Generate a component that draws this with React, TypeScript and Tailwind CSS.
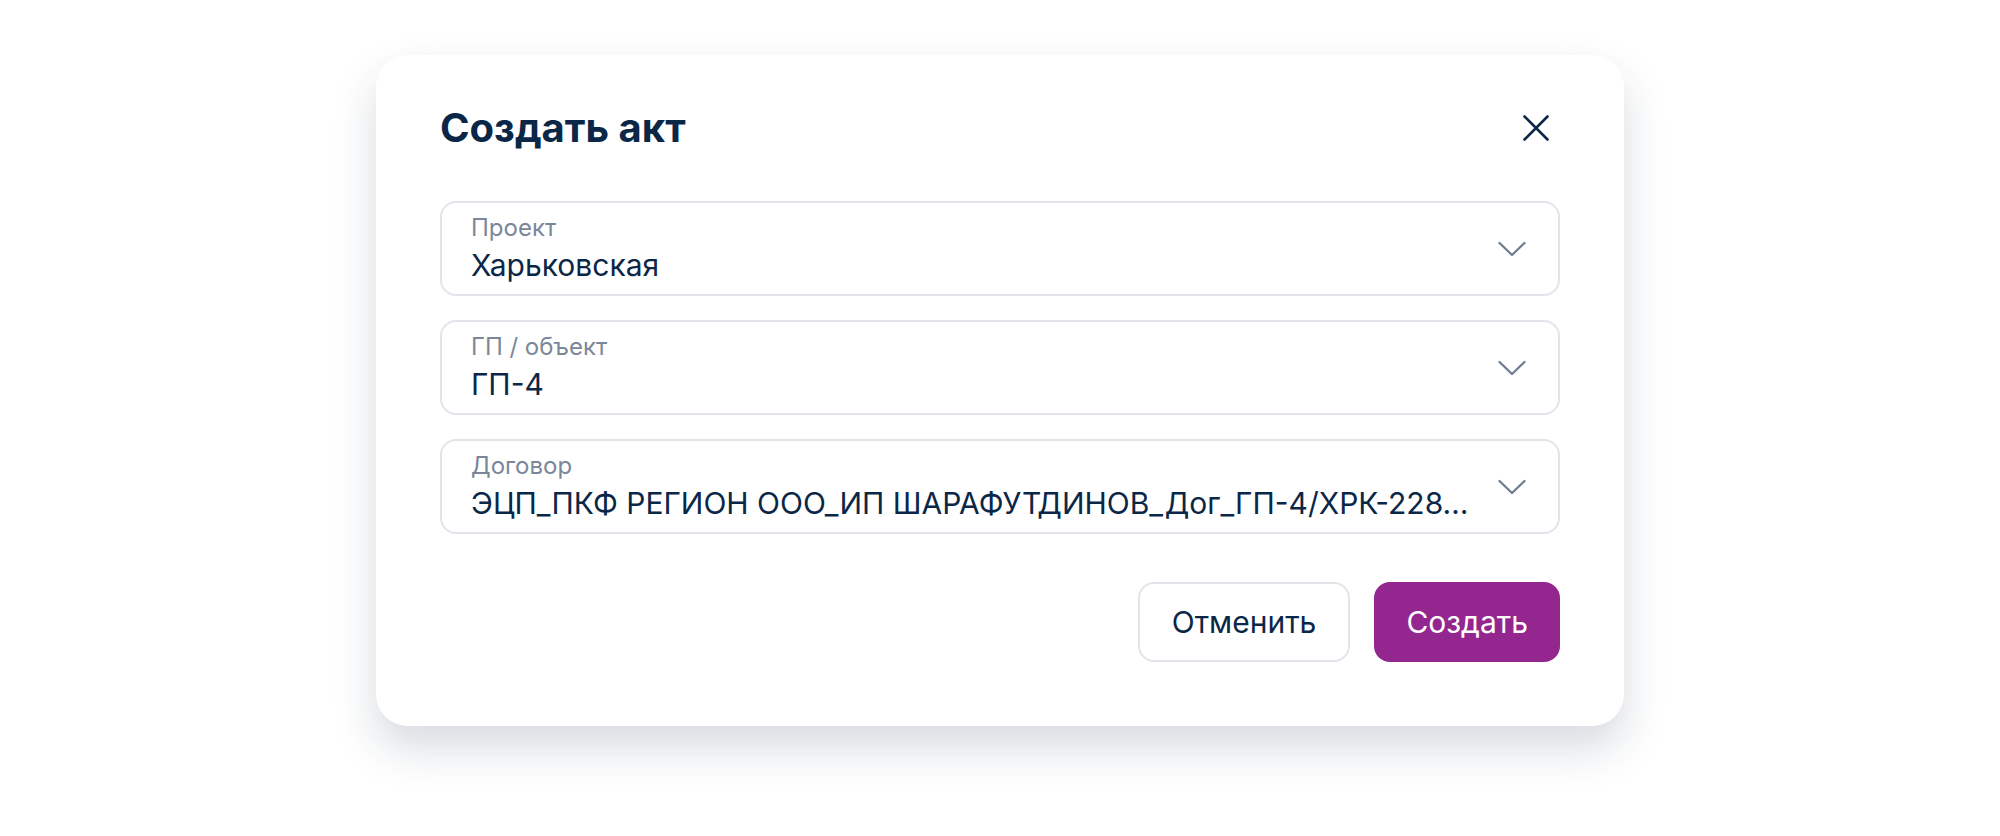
import { useState } from "react";

const fields = [
  { label: "Проект", value: "Харьковская" },
  { label: "ГП / объект", value: "ГП-4" },
  { label: "Договор", value: "ЭЦП_ПКФ РЕГИОН ООО_ИП ШАРАФУТДИНОВ_Дог_ГП-4/ХРК-228…" },
];

function Chevron() {
  return (
    <svg width="30" height="18" viewBox="0 0 30 18" fill="none">
      <path d="M2.5 3L15 15L27.5 3" stroke="#6f7b90" strokeWidth="2.3" strokeLinecap="round" strokeLinejoin="round" />
    </svg>
  );
}

function SelectField({ label, value }: { label: string; value: string }) {
  return (
    <div className="flex items-center rounded-2xl border-2 border-[#e1e5ea] bg-white pl-[29px] pr-[31px] py-[11px]">
      <div className="min-w-0 flex-1 pr-6">
        <div className="text-[24px] leading-[28px] text-[#7b8799]">{label}</div>
        <div className="mt-[5px] whitespace-nowrap text-[30px] leading-[36px] text-[#0b2748]">{value}</div>
      </div>
      <Chevron />
    </div>
  );
}

export default function App() {
  const [open, setOpen] = useState(true);

  return (
    <div className="flex min-h-[836px] items-start justify-center bg-white pt-[55px] font-['Inter',sans-serif]">
      {open && (
        <div className="w-[1248px] rounded-[32px] bg-white px-16 pt-12 pb-16 shadow-[0_22px_44px_rgba(20,40,70,0.17)]">
          <div className="flex h-[50px] items-center justify-between">
            <h1 className="text-[40px] font-bold text-[#0b2748]">Создать акт</h1>
            <button onClick={() => setOpen(false)} className="flex h-12 w-12 items-center justify-center">
              <svg width="26" height="26" viewBox="0 0 26 26" fill="none">
                <path d="M1.5 1.5L24.5 24.5M24.5 1.5L1.5 24.5" stroke="#0b2748" strokeWidth="2.6" strokeLinecap="round" />
              </svg>
            </button>
          </div>

          <div className="mt-12 flex flex-col gap-6">
            {fields.map((f) => (
              <SelectField key={f.label} label={f.label} value={f.value} />
            ))}
          </div>

          <div className="mt-12 flex justify-end gap-6">
            <button className="h-[80px] rounded-2xl border-2 border-[#e1e5ea] bg-white px-8 text-[30px] text-[#0b2748]">
              Отменить
            </button>
            <button className="h-[80px] rounded-2xl bg-[#93278f] px-8 text-[30px] text-white">
              Создать
            </button>
          </div>
        </div>
      )}
    </div>
  );
}
